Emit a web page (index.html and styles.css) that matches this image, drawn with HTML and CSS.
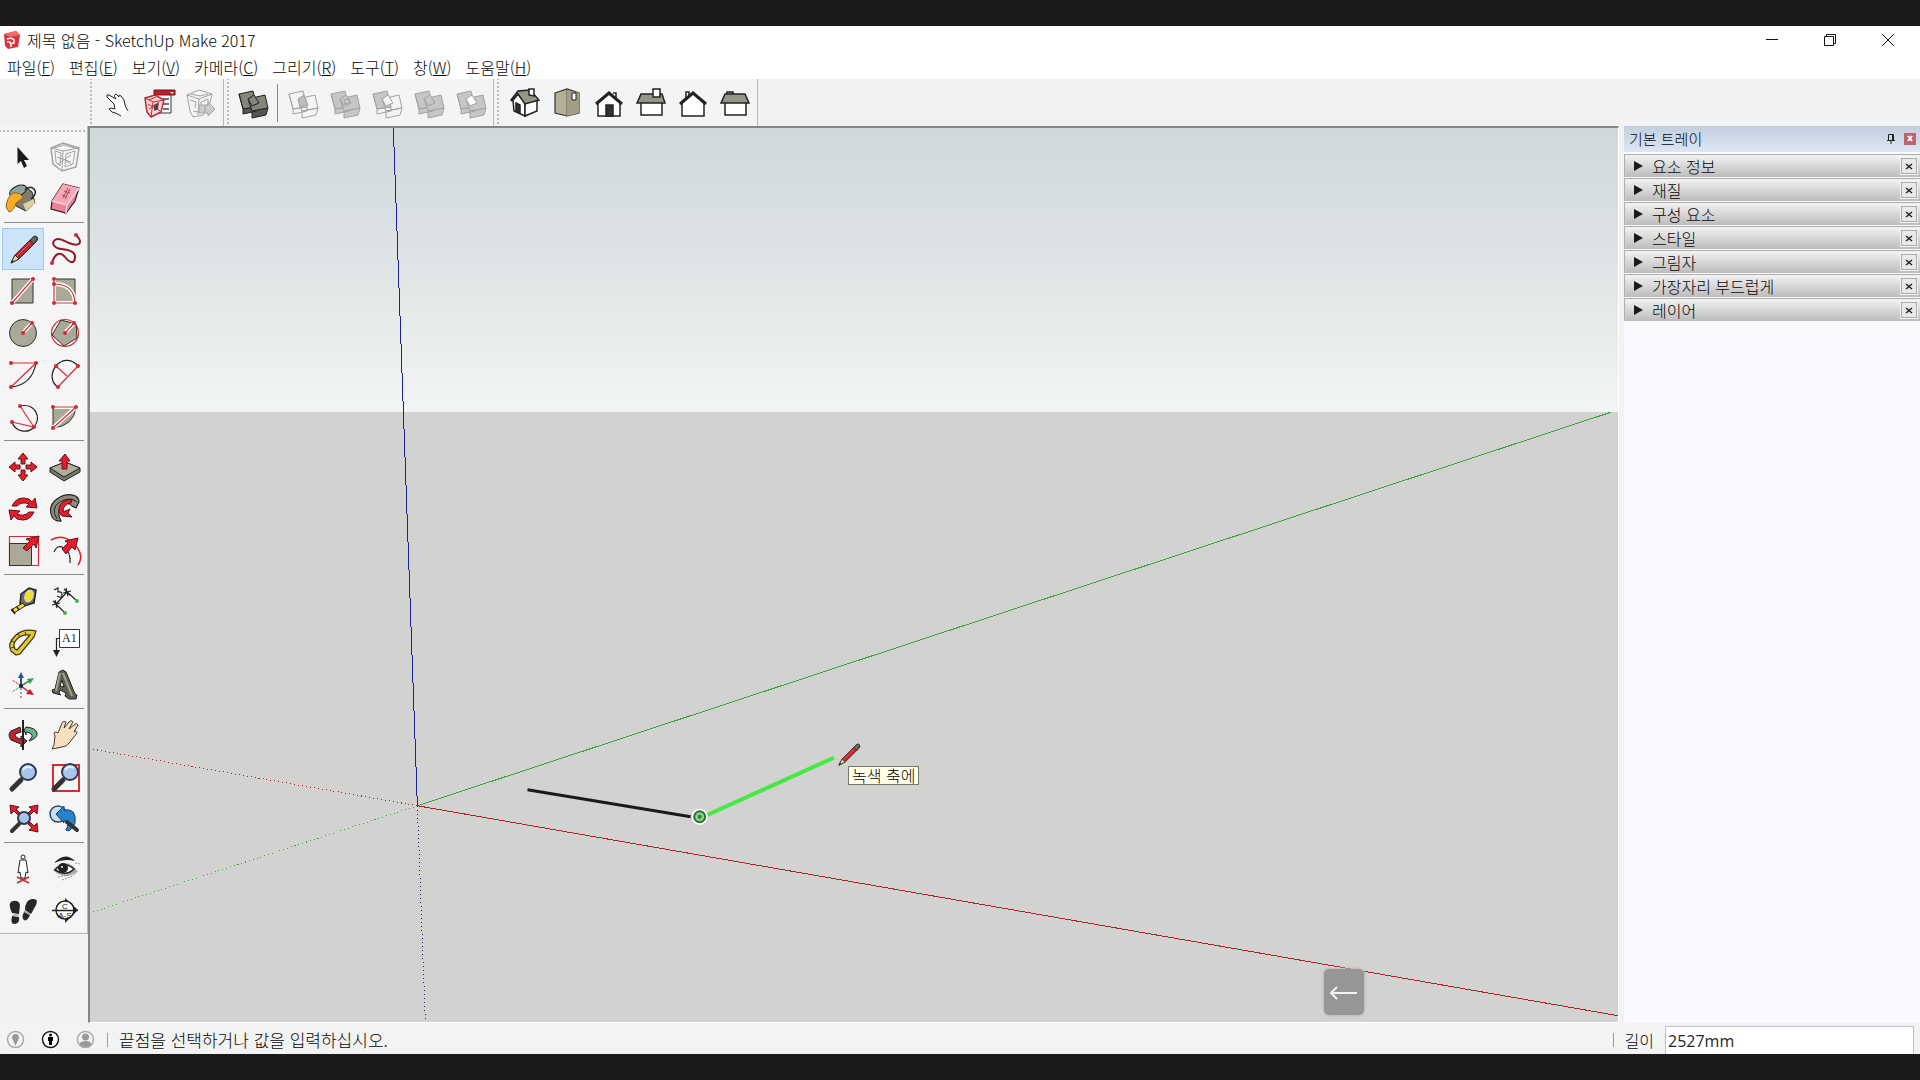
FILE: index.html
```html
<!DOCTYPE html>
<html lang="ko">
<head>
<meta charset="utf-8">
<title>제목 없음 - SketchUp Make 2017</title>
<link rel="stylesheet" href="styles.css">
</head>
<body>
<svg class="defs" aria-hidden="true">
  <symbol id="pencil" viewBox="0 0 42 42">
    <path d="M9 35 13 27 30 10Q33 7 35 9T34 14L17 31Z" fill="#c4242b" stroke="#333"/>
    <path d="M9 35 13 27 17 31Z" fill="#e8d9a8" stroke="#333"/>
    <path d="M9 35 10 32 12 33Z" fill="#222"/>
    <path d="M28 12 31 9Q34 7 35 9T34 13L32 16Z" fill="#666" stroke="#333"/>
    <path d="M15 28 28 15" stroke="#e46a6a"/>
  </symbol>
  <symbol id="solid-lips" viewBox="0 0 42 42">
    <path d="M6 12 10 27V32L24 29V25L10 27M19 29 35 26 33 33 19 36Z"/>
  </symbol>
  <symbol id="lens" viewBox="0 0 42 42">
    <path d="M10 33 19 24" stroke="#333" stroke-width="5" stroke-linecap="round"/>
    <circle cx="26" cy="16" r="8" fill="#a9c6ea" stroke="#2d3c4e" stroke-width="2"/>
    <path d="M21 14Q24 9 30 12" stroke="#e2effb" stroke-width="2" fill="none"/>
  </symbol>
</svg>

<div class="app">
  <header class="titlebar">
    <svg class="logo" viewBox="0 0 18 20"><path d="M1 4 13 1 17 5 15 17 5 19 2 16Z" fill="#d9343b"/><path d="M1 4 13 1 17 5 7 7Z" fill="#ef6b70"/><path d="M4 9Q9 7 11 10V13L7 14M4 12Q7 11 8 14V17" fill="none" stroke="#fff" stroke-width="1.5"/></svg>
    <h1 class="title">제목 없음 - SketchUp Make 2017</h1>
    <div class="window-buttons">
      <button aria-label="최소화"><svg viewBox="0 0 14 14"><path d="M1 6.5H13"/></svg></button>
      <button aria-label="이전 크기로"><svg viewBox="0 0 14 14"><path d="M1.5 3.5H10.5V12.5H1.5ZM3.5 3V1.5H12.5V10.5H11"/></svg></button>
      <button aria-label="닫기"><svg viewBox="0 0 14 14"><path d="M1 1 13 13M13 1 1 13"/></svg></button>
    </div>
  </header>

  <nav class="menubar">
    <button>파일(<u>F</u>)</button>
    <button>편집(<u>E</u>)</button>
    <button>보기(<u>V</u>)</button>
    <button>카메라(<u>C</u>)</button>
    <button>그리기(<u>R</u>)</button>
    <button>도구(<u>T</u>)</button>
    <button>창(<u>W</u>)</button>
    <button>도움말(<u>H</u>)</button>
  </nav>

  <div class="toolbars">
    <div class="bar">
      <button class="tool" aria-label="상호 작용"><svg viewBox="0 0 42 42"><path d="M10 15Q9 12 12 13L19 17 17 12Q22 11 25 15L27 24 31 29 24 34Q20 31 15 30L12 27Q13 25 18 27L17 22Q13 16 10 15Z" fill="#fff"/><path d="M24 34Q20 31 15 30L12 27Q13 25 18 27L17 22 10 15Q9 12 12 13L19 17Q16 13 19 12L22 15Q21 12 24 14L27 18Q28 26 31 29" fill="none" stroke="#222"/></svg></button>
      <button class="tool" aria-label="3D Warehouse"><svg viewBox="0 0 42 42"><path d="M16 11H32V31H16Z" fill="#fff" stroke="#333"/><path d="M15 8H36V13H15Z" fill="#b9202b" stroke="#7d1018"/><path d="M31 10H35L33 12Z" fill="#fff"/><path d="M24 17H30M24 22H30M24 27H30" stroke="#444" stroke-width="1.5"/><path d="M6 16 16 13 25 18 22 30 12 35 8 30Z" fill="#f9d6d7" stroke="#bd2831" stroke-width="1.5"/><path d="M6 16 14 20 25 18M14 20 12 35M9 22 21 29M10 27 20 20M17 15 10 18" stroke="#bd2831" fill="none"/><path d="M15 23 20 21 19 27 15 29Z" fill="#58404a"/></svg></button>
      <button class="tool" aria-label="구성 요소 공유"><svg viewBox="0 0 42 42" class="ghost"><path d="M6 13 18 8 31 12 28 25 22 33 12 35 9 29Z"/><path d="M6 13 18 17 31 12M10 12 19 14 27 12M18 17 17 33M9 18 15 20 14 26M20 20 27 17V23L20 25ZM12 29 17 30"/><path d="M18 23H27V20L34 27 27 34V31H18Z" fill="#ccc"/><path d="M24 23V31"/></svg></button>
    </div>
    <div class="bar bar-solids">
      <button class="tool" aria-label="외부 셸"><svg viewBox="0 0 42 42" class="shell"><path d="M6 12 20 9 24 25 10 27Z"/><use href="#solid-lips" fill="#55564f"/><path d="M15 17 32 13 35 26 19 29Z"/><path d="M15 17 21 13 26 21 19 24Z"/></svg></button>
      <span class="divider"></span>
      <button class="tool" aria-label="교차"><svg viewBox="0 0 42 42" class="ghost"><path d="M6 12 20 9 24 25 10 27ZM15 17 32 13 35 26 19 29Z"/><use href="#solid-lips"/><path d="M15 17 21 13 25 23 17 25Z" fill="#bbb"/></svg></button>
      <button class="tool" aria-label="합집합"><svg viewBox="0 0 42 42" class="ghost full"><path d="M6 12 20 9 24 25 10 27Z"/><use href="#solid-lips"/><path d="M15 17 32 13 35 26 19 29Z"/><path d="M15 17 21 13 26 21 19 24ZM19 18 24 17 25 21 20 22Z"/></svg></button>
      <button class="tool" aria-label="빼기"><svg viewBox="0 0 42 42" class="ghost"><path d="M6 12 20 9 24 25 10 27Z" fill="#c6c6c6"/><use href="#solid-lips"/><path d="M15 17 32 13 35 26 19 29Z"/><path d="M15 17 21 13 26 21 19 24Z" fill="#f4f4f4"/></svg></button>
      <button class="tool" aria-label="트림"><svg viewBox="0 0 42 42" class="ghost full"><path d="M6 12 20 9 24 25 10 27Z"/><use href="#solid-lips"/><path d="M15 17 32 13 35 26 19 29Z"/><path d="M15 17 21 13 26 21 19 24Z"/></svg></button>
      <button class="tool" aria-label="분할"><svg viewBox="0 0 42 42" class="ghost full"><path d="M6 12 20 9 24 25 10 27Z"/><use href="#solid-lips"/><path d="M15 17 32 13 35 26 19 29Z"/><path d="M15 17 21 13 26 21 19 24Z" fill="#fff"/></svg></button>
    </div>
    <div class="bar bar-views">
      <button class="tool" aria-label="등각"><svg viewBox="0 0 42 42" class="house"><path d="M9 18 14 12 21 21 21 34 10 29Z"/><path d="M21 21 33 18V29L21 34Z"/><path d="M7 18 14 9 26 8 35 18 21 22 14 12 8 19Z" fill="#95958a"/><path d="M25 7H30V14L25 13Z"/><path d="M12 21 16 23V31L12 29Z" fill="#333"/></svg></button>
      <button class="tool" aria-label="상단"><svg viewBox="0 0 42 42"><path d="M9 11 21 7 33 11V31L21 34 9 31Z" fill="#b3af98" stroke="#333" stroke-width="1.2"/><path d="M21 8V34" stroke="#55564f"/><path d="M21 8 33 11V31L21 34Z" fill="#a29e86"/><path d="M26 11H30V18H26Z" fill="#fff" stroke="#222"/></svg></button>
      <button class="tool" aria-label="전면"><svg viewBox="0 0 42 42" class="house"><path d="M25 11H28V18"/><path d="M10 20 21 11 32 20V34H10Z"/><path d="M8 22 21 11 34 22" class="eaves"/><path d="M18 23H25V34H18Z" fill="#333"/></svg></button>
      <button class="tool" aria-label="우측"><svg viewBox="0 0 42 42" class="house"><path d="M11 20H32V33H11Z"/><path d="M11 12H32L35 21H7Z" fill="#95958a"/><path d="M23 7H30V15H23Z"/></svg></button>
      <button class="tool" aria-label="후면"><svg viewBox="0 0 42 42" class="house"><path d="M14 18V10H17V15"/><path d="M10 20 21 11 32 20V34H10Z"/><path d="M8 22 21 11 34 22" class="eaves"/></svg></button>
      <button class="tool" aria-label="좌측"><svg viewBox="0 0 42 42" class="house"><path d="M13 12V10H19V12" fill="#aaa"/><path d="M11 20H32V33H11Z"/><path d="M11 12H31L35 21H7Z" fill="#95958a"/></svg></button>
    </div>
  </div>

  <div class="workspace">
    <aside class="palette-column">
      <div class="palette">
        <div class="tool-group">
          <button class="tool" aria-label="선택"><svg viewBox="0 0 42 42"><path d="M15.5 11V28L19 25 22 32 25 30 22 24H27Z" fill="#1a1a1a"/></svg></button>
          <button class="tool" aria-label="구성 요소 만들기"><svg viewBox="0 0 42 42" class="ghost"><path d="M7 12 19 7 35 12 32 31 18 35 9 28Z" stroke-width="1.5"/><path d="M7 12 19 15 35 12M19 15 18 35M10 12 20 9 31 12M11 15 17 17 16 30 12 26ZM22 18 31 15 29 28 21 31ZM13 21 27 26M14 28 27 19M21 24 28 29"/></svg></button>
          <button class="tool" aria-label="페인트"><svg viewBox="0 0 42 42"><path d="M9 14 22 7 30 14 33 25 24 33 14 28Z" fill="#807c6c" stroke="#222"/><path d="M21 26 32 21 33 26 24 33Z" fill="#dbcea4"/><ellipse cx="16" cy="13" rx="9" ry="5" transform="rotate(-25 16 13)" fill="#91a4a4" stroke="#222"/><path d="M11 15Q5 19 4 29L7 34Q12 33 14 25L21 20Q19 14 11 15Z" fill="#f3ad27" stroke="#94651a"/><path d="M23 12Q28 7 32 11T29 21" fill="none" stroke="#222" stroke-width="1.5"/></svg></button>
          <button class="tool" aria-label="지우개"><svg viewBox="0 0 42 42"><path d="M19 6 35 10 31 23 22 35 7 31 8 23Z" fill="#ee8098" stroke="#222" stroke-width="1.2"/><path d="M19 6 35 10 23 27 8 23Z" fill="#f9a7b7"/><path d="M8 23 23 27 22 35M23 27 35 10" fill="none" stroke="#fbd2da" stroke-width="1.5"/><path d="M19 20 24 10M21 21 26 11M18 17 23 19M20 13 26 15" stroke="#98515f"/></svg></button>
        </div>
        <div class="tool-group">
          <button class="tool active" aria-label="선" aria-pressed="true"><svg viewBox="0 0 42 42"><use href="#pencil"/></svg></button>
          <button class="tool" aria-label="자유형"><svg viewBox="0 0 42 42"><path d="M8 35C11 24 17 24 21 29S30 37 31 30 24 22 17 21 7 15 11 12 20 13 25 15C35 19 40 15 32 7" fill="none" stroke="#8e1c25" stroke-width="2"/><g class="dots"><circle cx="8" cy="35" r="2"/><circle cx="32" cy="7" r="2"/></g></svg></button>
          <button class="tool" aria-label="직사각형"><svg viewBox="0 0 42 42"><path class="face" d="M10 9H31V33H10Z"/><path class="halo" d="M10 33 31 9"/><path class="guide" d="M10 33 31 9"/><g class="dots"><circle cx="10" cy="33" r="2"/><circle cx="31" cy="9" r="2"/></g></svg></button>
          <button class="tool" aria-label="회전된 직사각형"><svg viewBox="0 0 42 42"><path class="face" d="M10 9H31V33H10Z"/><path class="halo" d="M10 9V33H31Q30 14 10 14"/><path class="guide" d="M10 9V33H31Q30 14 10 14"/><g class="dots"><circle cx="10" cy="9" r="2"/><circle cx="10" cy="14" r="2"/><circle cx="10" cy="33" r="2"/><circle cx="31" cy="33" r="2"/></g></svg></button>
          <button class="tool" aria-label="원"><svg viewBox="0 0 42 42"><circle class="face" cx="21" cy="21" r="13.5"/><path class="halo" d="M21 21 30 11"/><path class="guide" d="M21 21 30 11"/><g class="dots"><circle cx="21" cy="21" r="2"/><circle cx="30" cy="11" r="2"/></g></svg></button>
          <button class="tool" aria-label="다각형"><svg viewBox="0 0 42 42"><circle class="guide" cx="21" cy="21" r="13.5"/><path class="face" d="M17 8 32 12 33 26 20 34 8 23Z"/><path class="halo" d="M21 21 30 11"/><path class="guide" d="M21 21 30 11"/><g class="dots"><circle cx="21" cy="21" r="2"/><circle cx="30" cy="11" r="2"/></g></svg></button>
          <button class="tool" aria-label="호"><svg viewBox="0 0 42 42"><path class="ink" d="M34 9Q30 31 9 33"/><path class="guide" d="M9 9H34L9 33"/><g class="dots"><circle cx="9" cy="9" r="2"/><circle cx="34" cy="9" r="2"/><circle cx="9" cy="33" r="2"/></g></svg></button>
          <button class="tool" aria-label="2점 호"><svg viewBox="0 0 42 42"><path class="ink" d="M34 12C26 3 17 6 12 12S6 28 14 33"/><path class="guide" d="M34 12 14 33M12 12 23 22"/><g class="dots"><circle cx="12" cy="12" r="2"/><circle cx="34" cy="12" r="2"/><circle cx="14" cy="33" r="2"/></g></svg></button>
          <button class="tool" aria-label="3점 호"><svg viewBox="0 0 42 42"><path class="ink" d="M18 10C33 7 40 21 32 31M32 31C26 38 13 36 10 26"/><path class="guide" d="M18 10 32 31 10 26"/><g class="dots"><circle cx="18" cy="10" r="2"/><circle cx="10" cy="26" r="2"/><circle cx="32" cy="31" r="2"/></g></svg></button>
          <button class="tool" aria-label="파이"><svg viewBox="0 0 42 42"><path class="face" d="M9 11H32Q30 30 9 32Z"/><path class="halo" d="M9 11H32L9 32"/><path class="guide" d="M9 11H32L9 32"/><g class="dots"><circle cx="9" cy="11" r="2"/><circle cx="32" cy="11" r="2"/><circle cx="9" cy="32" r="2"/></g></svg></button>
        </div>
        <div class="tool-group">
          <button class="tool" aria-label="이동"><svg viewBox="0 0 42 42"><g class="red-solid"><path d="M21 7 26 13H23V18H19V13H16ZM21 35 26 29H23V24H19V29H16ZM7 21 13 16V19H18V23H13V26ZM35 21 29 16V19H24V23H29V26Z"/></g></svg></button>
          <button class="tool" aria-label="밀기/끌기"><svg viewBox="0 0 42 42"><path d="M6 22 21 16 36 22V26L20 35 6 26Z" fill="#77776a" stroke="#222"/><path d="M6 22 21 16 36 22 20 31Z" fill="#b0ad9a" stroke="#222"/><g class="red-solid"><path d="M21 8 26 15H23V23H18V15H15Z"/></g></svg></button>
          <button class="tool" aria-label="회전"><svg viewBox="0 0 42 42"><g class="red-solid"><path d="M10 18Q15 7 27 11L30 14 33 10 35 20 24 19 27 16Q20 13 15 18ZM32 24Q27 35 15 31L12 28 9 32 7 22 18 23 15 26Q22 29 27 24Z"/></g></svg></button>
          <button class="tool" aria-label="따라가기"><svg viewBox="0 0 42 42"><path d="M17 33C5 34 3 18 13 11S35 6 35 14L32 20 28 18Q24 13 18 18T17 33Z" fill="#8b8b7e" stroke="#222" stroke-width="1.2"/><path d="M13 31Q6 20 16 14T33 14" fill="none" stroke="#222"/><g class="red-solid"><path d="M16 17Q22 10 28 12L27 15Q19 16 19 24L26 21 24 25 28 29 18 28Q13 24 16 17Z"/></g></svg></button>
          <button class="tool" aria-label="배율"><svg viewBox="0 0 42 42"><path class="guide" d="M7.5 6.5H36.5V35.5H7.5Z"/><path class="face" d="M7.5 13.5H29.5V35.5H7.5Z"/><g class="red-solid"><path d="M21 18 28 11 24 9 37 6 34 18 32 14 25 21Z"/></g></svg></button>
          <button class="tool" aria-label="오프셋"><svg viewBox="0 0 42 42"><path d="M7 10Q19 3 30 14T34 35" fill="none" stroke="#d3212d" stroke-width="1.5"/><path class="ink" d="M10 22Q13 14 20 18T26 33"/><g class="red-solid"><path d="M18 19 24 13 21 11 34 8 31 20 28 17 22 24Z"/></g></svg></button>
        </div>
        <div class="tool-group">
          <button class="tool" aria-label="줄자"><svg viewBox="0 0 42 42"><path d="M19 14 27 8 34 10 32 23 22 26 18 24Z" fill="#6d6d68" stroke="#222" stroke-width="1.5"/><ellipse cx="27" cy="16" rx="4" ry="6" transform="rotate(20 27 16)" fill="#f3df25" stroke="#ddd"/><path d="M9 30 21 23 23 26 12 33Z" fill="#f3df25" stroke="#222"/><path d="M10 29 13 34M15 27 17 30" stroke="#222" stroke-width="1.5"/></svg></button>
          <button class="tool" aria-label="치수"><svg viewBox="0 0 42 42"><path class="ink" d="M12 24 23 12M10 22 21 33M21 10 33 21M8 25 16 23M19 13 27 11M22 8 24 16M11 20 13 28M9 21 15 27M20 9 26 15"/><path class="ink" d="M10 10 14 8 14 12Q18 11 18 15T13 16"/><g fill="#4bb04d"><circle cx="21" cy="33" r="2"/><circle cx="33" cy="21" r="2"/></g></svg></button>
          <button class="tool" aria-label="각도기"><svg viewBox="0 0 42 42"><path d="M14 33 9 29Q5 22 13 14T34 9L32 15 18 32ZM15 28 28 13Q20 12 15 17T13 27Z" fill="#e4c930" stroke="#3c3512" stroke-width="1.2" fill-rule="evenodd"/><path d="M9 26 12 25M10 19 13 21M16 12 18 15M23 10 24 13" stroke="#3c3512"/></svg></button>
          <button class="tool" aria-label="텍스트"><svg viewBox="0 0 42 42"><path d="M15.5 7.5H35.5V25.5H15.5Z" fill="#fff" stroke="#333"/><path class="ink" d="M15 16.5H12.5V29"/><path d="M9 28H16L12.5 35Z" fill="#222"/><text x="18" y="20" class="label-serif">A1</text></svg></button>
          <button class="tool" aria-label="축"><svg viewBox="0 0 42 42"><path d="M19 22V12" stroke="#2a5199" stroke-width="2"/><path d="M19 8 22 14H16Z" fill="#2a5199"/><path d="M19 22 27 17" stroke="#3a9b48" stroke-width="1.5"/><path d="M32 14 25 15 28 20Z" fill="#3a9b48"/><path d="M19 22 27 28" stroke="#c3202c" stroke-width="1.5"/><path d="M32 31 28 25 24 30Z" fill="#c3202c"/><path d="M18 21 10 16" stroke="#c3202c" stroke-dasharray="2 1"/><path d="M18 23 10 28" stroke="#3a9b48" stroke-dasharray="2 1"/><path d="M19 24V34" stroke="#2a5199" stroke-dasharray="2 2"/><circle cx="19" cy="22" r="2" fill="#222"/></svg></button>
          <button class="tool" aria-label="3D 텍스트"><svg viewBox="0 0 42 42"><path d="M15 8 19 6 22 8 31 30 33 31 32 35 25 35 21 32 22 29 16 26 15 29 17 31 9 29 8 26 11 25Z" fill="#5e5e55" stroke="#222"/><path d="M16 9 12 27M19 9 28 32" stroke="#a5a493" stroke-width="2"/><path d="M18 16 16 22 20 23Z" fill="#f4f4f4" stroke="#222"/></svg></button>
        </div>
        <div class="tool-group">
          <button class="tool" aria-label="궤도"><svg viewBox="0 0 42 42"><path d="M18 13 9 17Q5 21 9 26L19 30V33L25 27 19 22V25Q13 24 13 20L19 18Z" fill="#bd2630" stroke="#222"/><path d="M24 13Q34 14 35 19T27 27L30 23Q31 19 24 18V21L22 16Z" fill="#65b58a" stroke="#222"/><path d="M21 6V36" stroke="#222" stroke-width="2"/></svg></button>
          <button class="tool" aria-label="이동 보기"><svg viewBox="0 0 42 42"><path d="M10 31 8 35 18 33Q23 33 26 28L33 19Q33 16 30 18L34 11Q32 8 30 11L25 15 29 8Q27 5 25 8L20 14 22 8Q20 6 18 9L14 19 12 18Q9 18 11 22Z" fill="#f6dfbd" stroke="#443b2e"/></svg></button>
          <button class="tool" aria-label="확대/축소"><svg viewBox="0 0 42 42"><use href="#lens"/></svg></button>
          <button class="tool" aria-label="창 확대/축소"><svg viewBox="0 0 42 42"><path d="M9 9H35V35H9Z" fill="none" stroke="#d92a38" stroke-width="2"/><use href="#lens"/></svg></button>
          <button class="tool" aria-label="전체 보기"><svg viewBox="0 0 42 42"><g class="red-solid"><path d="M8 7 17 9 14 11 18 15 16 17 12 13 9 16ZM36 7 27 9 30 11 26 15 28 17 32 13 35 16ZM36 34 27 32 30 30 26 26 28 24 32 28 35 25Z"/></g><path d="M10 33 17 26" stroke="#333" stroke-width="4" stroke-linecap="round"/><circle cx="22" cy="20" r="6" fill="#a9c6ea" stroke="#2d3c4e" stroke-width="2"/></svg></button>
          <button class="tool" aria-label="이전"><svg viewBox="0 0 42 42"><circle cx="14" cy="16" r="8" fill="#c8dff3" stroke="#344a5b" stroke-width="1.5"/><path d="M12 16 20 8V12Q33 10 31 25L29 29 25 33 22 32Q26 26 20 22V25Z" fill="#2583ce" stroke="#153e68"/><path d="M23 24 33 32" stroke="#333" stroke-width="4" stroke-linecap="round"/></svg></button>
        </div>
        <div class="tool-group">
          <button class="tool" aria-label="카메라 배치"><svg viewBox="0 0 42 42"><path d="M15 35 27 29M15 29 27 35" stroke="#d3212d" stroke-width="1.5"/><circle cx="21" cy="9" r="2" fill="#fff" stroke="#222"/><path d="M18 12H24L26 25 24 24 23 30H19L18 24 16 25Z" fill="#fff" stroke="#222"/></svg></button>
          <button class="tool" aria-label="둘러보기"><svg viewBox="0 0 42 42"><path d="M10 15Q21 3 31 13 20 10 10 15Z" fill="#222"/><path d="M9 22Q20 9 31 20L34 24 23 28Q15 28 9 22Z" fill="#aaa"/><path d="M11 22Q20 12 30 21 22 29 11 22Z" fill="#fff" stroke="#222" stroke-width="1.5"/><circle cx="19" cy="20" r="5" fill="#222"/><circle cx="18" cy="19" r="1" fill="#fff"/><path d="M14 29 32 26M18 32 29 28M31 15 36 16" stroke="#999" stroke-dasharray="2 1"/></svg></button>
          <button class="tool" aria-label="걷기"><svg viewBox="0 0 42 42"><g fill="#262626"><path d="M10 23Q5 12 11 11T18 15L17 24ZM10 26 17 27Q18 33 13 34T10 26Z"/><path d="M23 20Q23 10 30 9T34 15L29 24ZM22 22 28 25Q25 32 22 30T22 22Z"/></g><path d="M11 25H17M22 21 28 24" stroke="#888"/></svg></button>
          <button class="tool" aria-label="단면"><svg viewBox="0 0 42 42"><path d="M21 8 34 20 21 33Z" fill="#222"/><circle cx="21" cy="20" r="9" fill="#fff" stroke="#222" stroke-width="1.5"/><path d="M8 20.5H34" stroke="#222" stroke-width="1.5"/><text x="21" y="19" class="label-tiny">C</text><text x="21" y="28" class="label-tiny">A-S</text></svg></button>
        </div>
      </div>
    </aside>

    <main class="viewport">
      <svg class="scene" viewBox="0 0 1528 893" preserveAspectRatio="xMinYMin slice">
        <g class="axes">
          <path class="blue" d="M327 677 303 0"/>
          <path class="green" d="M327 677 1519 284"/>
          <path class="red" d="M327 677 1528 887"/>
          <path class="blue dotted" d="M327 677 335 894"/>
          <path class="green dotted" d="M327 677 0 784"/>
          <path class="red dotted" d="M327 677 0 620"/>
        </g>
        <path d="M437 661 600 688" stroke="#1a1a1a" stroke-width="3"/>
        <path d="M617 686 743 629" stroke="#46e846" stroke-width="4"/>
        <circle cx="609" cy="688" r="8" fill="#fff"/>
        <circle cx="609" cy="688" r="5.5" fill="#86d486" stroke="#2f6e35" stroke-width="2"/>
        <circle cx="609" cy="688" r="2" fill="#2f7a35"/>
        <use href="#pencil" x="741" y="609" width="33" height="33"/>
      </svg>
      <div class="tooltip" role="tooltip">녹색 축에</div>
      <kbd class="key"><svg viewBox="0 0 40 46"><path d="M8 24H33M13 18 7 24 13 30" fill="none" stroke="#f4f4f4" stroke-width="2"/></svg></kbd>
    </main>

    <aside class="tray">
      <header class="tray-head">
        <h2>기본 트레이</h2>
        <button class="pin" aria-label="고정"><svg viewBox="0 0 12 12"><path d="M3.5 1.5H8.5V7.5H3.5ZM7.5 2V7M2 7.5H10M6 8V11" fill="none" stroke="#222"/></svg></button>
        <button class="tray-close" aria-label="트레이 닫기"><svg viewBox="0 0 12 12"><path d="M4 3 8 8M8 3 4 8" stroke="#fff" stroke-width="2"/></svg></button>
      </header>
      <section class="panel"><button class="panel-title">요소 정보</button><button class="panel-close" aria-label="닫기"><svg viewBox="0 0 14 14"><path d="M4 5 10 10M10 5 4 10"/></svg></button></section>
      <section class="panel"><button class="panel-title">재질</button><button class="panel-close" aria-label="닫기"><svg viewBox="0 0 14 14"><path d="M4 5 10 10M10 5 4 10"/></svg></button></section>
      <section class="panel"><button class="panel-title">구성 요소</button><button class="panel-close" aria-label="닫기"><svg viewBox="0 0 14 14"><path d="M4 5 10 10M10 5 4 10"/></svg></button></section>
      <section class="panel"><button class="panel-title">스타일</button><button class="panel-close" aria-label="닫기"><svg viewBox="0 0 14 14"><path d="M4 5 10 10M10 5 4 10"/></svg></button></section>
      <section class="panel"><button class="panel-title">그림자</button><button class="panel-close" aria-label="닫기"><svg viewBox="0 0 14 14"><path d="M4 5 10 10M10 5 4 10"/></svg></button></section>
      <section class="panel"><button class="panel-title">가장자리 부드럽게</button><button class="panel-close" aria-label="닫기"><svg viewBox="0 0 14 14"><path d="M4 5 10 10M10 5 4 10"/></svg></button></section>
      <section class="panel"><button class="panel-title">레이어</button><button class="panel-close" aria-label="닫기"><svg viewBox="0 0 14 14"><path d="M4 5 10 10M10 5 4 10"/></svg></button></section>
    </aside>
  </div>

  <footer class="statusbar">
    <div class="status-icons">
      <button aria-label="위치"><svg viewBox="0 0 19 19"><circle cx="9.5" cy="9.5" r="8" fill="#f4f4f4" stroke="#aaa" stroke-width="1.5"/><path d="M9.5 16 6 8Q6 4 9.5 4T13 8Z" fill="#999"/></svg></button>
      <button aria-label="크레딧"><svg viewBox="0 0 19 19"><circle cx="9.5" cy="9.5" r="8" fill="#fff" stroke="#1a1a1a" stroke-width="1.5"/><circle cx="9.5" cy="5" r="1.5"/><path d="M7 7H12V11H11V15H8V11H7Z"/></svg></button>
      <button aria-label="로그인"><svg viewBox="0 0 19 19"><circle cx="9.5" cy="9.5" r="8" fill="#f4f4f4" stroke="#aaa" stroke-width="1.5"/><circle cx="9.5" cy="7" r="3.5" fill="#999"/><path d="M4 15V13Q5 11 9.5 11T15 13V15Q10 19 4 15Z" fill="#999"/></svg></button>
    </div>
    <span class="rule"></span>
    <p class="hint">끝점을 선택하거나 값을 입력하십시오.</p>
    <span class="rule"></span>
    <label for="length">길이</label>
    <input id="length" type="text" value="2527mm">
  </footer>
</div>
</body>
</html>
```
FILE: styles.css
```css
* { box-sizing: border-box; }

body {
  margin: 0;
  background: #1a1a1a;
  color: #060608;
  font: 300 16px/20px "Noto Sans CJK KR", sans-serif;
}

button {
  margin: 0;
  padding: 0;
  border: 0;
  background: none;
  color: inherit;
  font: inherit;
}

h1, h2, p { margin: 0; font: inherit; }
svg { display: block; }
.defs { position: absolute; width: 0; height: 0; }

.app {
  display: flex;
  flex-direction: column;
  height: 100vh;
  padding: 26px 0;
}

/* Title and menus */
.titlebar {
  display: flex;
  align-items: center;
  gap: 6px;
  height: 28px;
  padding: 0 3px;
  background: #fff;
}
.logo { width: 18px; height: 20px; }
.title { flex: 1; }
.window-buttons { display: flex; }
.window-buttons button { display: grid; place-items: center; width: 58px; height: 28px; }
.window-buttons svg { width: 14px; height: 14px; fill: none; stroke: #111; }

.menubar {
  display: flex;
  gap: 14px;
  height: 25px;
  padding: 0 7px;
  background: #fff;
}
.menubar button { height: 26px; }

/* Tool buttons */
.tool { width: 42px; height: 42px; }
.tool svg { width: 42px; height: 42px; fill: none; }
.tool.active { background: #cce4f9; box-shadow: inset 0 0 0 1px #9ccaf0; }

.toolbars {
  display: flex;
  height: 47px;
  padding-left: 87px;
  background: #f2f2f2;
}
.bar {
  display: flex;
  align-items: center;
  padding-left: 10px;
  border-right: 1px solid #b8b8b8;
  background: radial-gradient(circle at 2px 2px, #bbb 1px, transparent 1px) 2px 2px / 4px 4px repeat-y #f4f4f4;
}
.bar-solids { padding-left: 9px; }
.bar-views { padding-right: 1px; }
.divider { width: 1px; height: 38px; margin: 0 5px 0 2px; background: #888; }

.palette-column { flex: none; width: 88px; background: #f2f2f2; }
.palette {
  padding: 10px 0 1px 2px;
  border: solid #b8b8b8;
  border-width: 0 1px 1px 0;
  background: radial-gradient(circle at 2px 2px, #bbb 1px, transparent 1px) 2px 3px / 4px 4px repeat-x #f5f5f5;
}
.tool-group { display: grid; grid-template-columns: 42px 42px; }
.tool-group + .tool-group {
  margin-top: 2px;
  padding-top: 6px;
  background: linear-gradient(#8c8c8c, #8c8c8c) 2px 0 / 80px 1px no-repeat;
}

.ghost { stroke: #a2a2a2; }
.full > :not([fill]) { fill: #c6c6c6; }
.shell > * { stroke: #222; }
.shell > :not([fill]) { fill: #85857a; }
.house > * { stroke: #222; stroke-width: 1.5; }
.house > :not([fill]) { fill: #fff; }
.house > .eaves:not([fill]) { fill: none; stroke-width: 3; }
.face { fill: #aaa997; stroke: #333; }
.halo { fill: none; stroke: #fff; stroke-width: 4; }
.guide { fill: none; stroke: #d2303c; stroke-width: 1.2; }
.ink { fill: none; stroke: #222; stroke-width: 1.2; }
.dots { fill: #cf2936; }
.red-solid { fill: #e51c2c; stroke: #5d151b; }
.label-serif { fill: #222; font: 12px "Liberation Serif", serif; }
.label-tiny { fill: #222; font: 8px "Liberation Sans", sans-serif; text-anchor: middle; }

/* Drawing area */
.workspace { display: flex; flex: 1; min-height: 0; background: #f2f2f2; }
.viewport {
  position: relative;
  flex: 1;
  min-width: 0;
  overflow: hidden;
  border: solid;
  border-width: 2px 1px 1px 2px;
  border-color: #858585 #fff #fff #858585;
  background: linear-gradient(#d0d8da, #e1e6e7 54%, #f2f5f6) 0 0 / 100% 284px no-repeat #d2d2d0;
}
.scene { width: 100%; height: 100%; }
.axes { fill: none; shape-rendering: crispEdges; }
.blue { stroke: #2121a0; }
.green { stroke: #3ba53b; }
.red { stroke: #b3202c; }
.dotted { stroke-dasharray: 1 3; }
.tooltip {
  position: absolute;
  left: 758px;
  top: 638px;
  height: 19px;
  padding: 0 3px;
  border: 1px solid #77776c;
  background: #ffffe8;
  line-height: 17px;
}
.key {
  position: absolute;
  left: 1234px;
  top: 841px;
  width: 40px;
  height: 46px;
  border-radius: 5px;
  background: #969696;
  box-shadow: 0 0 3px 1px #bbb;
}

/* Tray */
.tray { flex: none; width: 296px; margin-left: 5px; background: #f8faff; }
.tray-head {
  display: flex;
  align-items: center;
  gap: 7px;
  height: 26px;
  margin-bottom: 2px;
  padding: 0 4px 0 5px;
  background: linear-gradient(#c3cfdf, #dce6f4);
  font-size: 15px;
}
.tray-head h2 { flex: 1; }
.tray-head svg { width: 12px; height: 12px; }
.tray-close { background: #c2636b; }
.panel {
  display: flex;
  align-items: center;
  height: 23px;
  margin-bottom: 1px;
  padding: 0 3px 0 9px;
  border: solid #aeaeae;
  border-width: 1px 0 0 1px;
  background: linear-gradient(#f3f3f3, #bcbcbc);
}
.panel-title { display: flex; flex: 1; align-items: center; gap: 9px; padding-bottom: 1px; text-align: left; }
.panel-title::before {
  content: "";
  border: solid transparent;
  border-width: 5px 0 5px 9px;
  border-left-color: #1a1a1a;
}
.panel-close { border: 1px solid #aaa; outline: 1px solid #f5f5f5; background: #e9e9e9; }
.panel-close svg { width: 14px; height: 14px; stroke: #222; stroke-width: 1.5; }

/* Status bar */
.statusbar {
  display: flex;
  align-items: center;
  height: 31px;
  padding: 2px 6px 0;
  background: #f3f3f3;
}
.status-icons { display: flex; gap: 16px; margin-right: 12px; }
.status-icons svg { width: 19px; height: 19px; }
.rule { width: 1px; height: 14px; background: #999; }
.hint { flex: 1; padding-left: 11px; font-size: 17px; }
.statusbar label { padding: 0 11px; }
.statusbar input {
  align-self: flex-end;
  width: 249px;
  height: 28px;
  padding: 0 2px;
  border: 1px solid #b9c1d3;
  border-bottom: 0;
  background: #fff;
  color: #26262c;
  font: 400 16px "Open Sans", sans-serif;
}
```
